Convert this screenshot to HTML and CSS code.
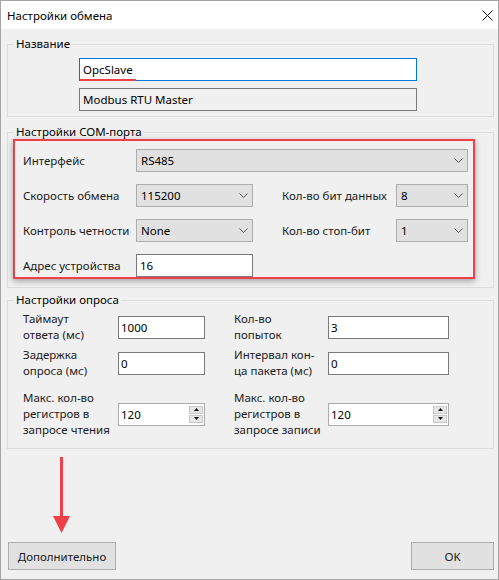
FILE: index.html
```html
<!DOCTYPE html>
<html lang="ru">
<head>
  <meta charset="UTF-8">
  <title>Настройки обмена</title>
  <link rel="stylesheet" href="styles.css">
</head>
<body>
  <div class="window">
    <div class="titlebar">
      <span class="title">Настройки обмена</span>
      <svg class="close" width="11" height="11" viewBox="0 0 11 11">
        <path d="M0.5 0.5 L10.5 10.5 M10.5 0.5 L0.5 10.5" stroke="#111" stroke-width="1" fill="none"/>
      </svg>
    </div>

    <div class="content">
      <fieldset class="group">
        <legend>Название</legend>
        <div class="group-body body-name">
          <div class="edit edit-focus">OpcSlave<i class="mark"></i></div>
          <div class="edit edit-readonly">Modbus RTU Master</div>
        </div>
      </fieldset>

      <fieldset class="group group-com">
        <legend>Настройки COM-порта</legend>
        <div class="group-body body-com">
          <div class="highlight">
            <div class="com-grid">
              <span class="lbl">Интерфейс</span>
              <div class="combo combo-wide">RS485<svg class="chev" width="9" height="5" viewBox="0 0 9 5"><path d="M0.5 0.5 L4.5 4.5 L8.5 0.5" stroke="#555" fill="none"/></svg></div>

              <span class="lbl">Скорость обмена</span>
              <div class="combo">115200<svg class="chev" width="9" height="5" viewBox="0 0 9 5"><path d="M0.5 0.5 L4.5 4.5 L8.5 0.5" stroke="#555" fill="none"/></svg></div>
              <span class="lbl lbl-right">Кол-во бит данных</span>
              <div class="combo">8<svg class="chev" width="9" height="5" viewBox="0 0 9 5"><path d="M0.5 0.5 L4.5 4.5 L8.5 0.5" stroke="#555" fill="none"/></svg></div>

              <span class="lbl">Контроль четности</span>
              <div class="combo">None<svg class="chev" width="9" height="5" viewBox="0 0 9 5"><path d="M0.5 0.5 L4.5 4.5 L8.5 0.5" stroke="#555" fill="none"/></svg></div>
              <span class="lbl lbl-right">Кол-во стоп-бит</span>
              <div class="combo">1<svg class="chev" width="9" height="5" viewBox="0 0 9 5"><path d="M0.5 0.5 L4.5 4.5 L8.5 0.5" stroke="#555" fill="none"/></svg></div>

              <span class="lbl">Адрес устройства</span>
              <div class="edit">16</div>
            </div>
          </div>
        </div>
      </fieldset>

      <fieldset class="group group-poll">
        <legend>Настройки опроса</legend>
        <div class="group-body body-poll">
          <div class="poll-row row-1">
            <span class="plbl">Таймаут<br>ответа (мс)</span>
            <div class="edit edit-num">1000</div>
            <span class="plbl plbl-right">Кол-во<br>попыток</span>
            <div class="edit edit-num">3</div>
          </div>
          <div class="poll-row row-2">
            <span class="plbl">Задержка<br>опроса (мс)</span>
            <div class="edit edit-num">0</div>
            <span class="plbl plbl-right">Интервал кон-<br>ца пакета (мс)</span>
            <div class="edit edit-num">0</div>
          </div>
          <div class="poll-row row-3">
            <span class="plbl">Макс. кол-во<br>регистров в<br>запросе чтения</span>
            <div class="edit edit-num spin">120
              <div class="spin-btns">
                <span class="spin-btn"><svg width="5" height="3" viewBox="0 0 5 3"><path d="M2.5 0 L5 3 L0 3 Z" fill="#111"/></svg></span>
                <span class="spin-btn"><svg width="5" height="3" viewBox="0 0 5 3"><path d="M0 0 L5 0 L2.5 3 Z" fill="#111"/></svg></span>
              </div>
            </div>
            <span class="plbl plbl-right">Макс. кол-во<br>регистров в<br>запросе записи</span>
            <div class="edit edit-num spin">120
              <div class="spin-btns">
                <span class="spin-btn"><svg width="5" height="3" viewBox="0 0 5 3"><path d="M2.5 0 L5 3 L0 3 Z" fill="#111"/></svg></span>
                <span class="spin-btn"><svg width="5" height="3" viewBox="0 0 5 3"><path d="M0 0 L5 0 L2.5 3 Z" fill="#111"/></svg></span>
              </div>
            </div>
          </div>
        </div>
      </fieldset>
    </div>

    <div class="footer">
      <button class="btn btn-more">Дополнительно</button>
      <button class="btn btn-ok">OK</button>
      <!-- стрелка-указатель на кнопку -->
      <svg class="arrow" width="19" height="77" viewBox="0 0 19 77">
        <rect x="8" y="0" width="3" height="62" fill="#ef4047"/>
        <path d="M1 59 L18 59 L9.5 76 Z" fill="#ef4047"/>
      </svg>
    </div>
  </div>
</body>
</html>
```

FILE: styles.css
```css
* {
  box-sizing: border-box;
}

body {
  margin: 0;
  font-family: "Noto Sans", "Open Sans", sans-serif;
  font-size: 11.5px;
  color: #000;
  background: #f0f0f0;
}

.window {
  position: relative;
  width: 499px;
  height: 580px;
  border: 1px solid #a5a5a5;
  background: #f0f0f0;
  display: flex;
  flex-direction: column;
}

.titlebar {
  height: 28px;
  background: #fff;
  display: flex;
  align-items: center;
  justify-content: space-between;
  padding: 0 5px 0 6px;
}

.content {
  padding: 0 4px 0 6px;
}

/* рамки групп */
.group {
  margin: 8px 0 0;
  padding: 0;
  border: 1px solid #dcdcdc;
  min-width: 0;
}

.group legend {
  line-height: 14px;
  padding: 0 2px;
  margin-left: 6px;
}

.group-poll {
  margin-top: 5px;
}

.body-name {
  padding: 7px 0 5px 71px;
}

.body-com {
  padding: 0 18px 8px 5px;
}

.body-poll {
  padding: 4px 0 10px 15px;
}

/* поля ввода */
.edit {
  position: relative;
  height: 23px;
  line-height: 21px;
  border: 1px solid #7a7a7a;
  background: #fff;
  padding: 0 3px;
  white-space: nowrap;
}

.body-name .edit {
  width: 338px;
}

.body-name .edit + .edit {
  margin-top: 7px;
}

.edit-focus {
  border-color: #0078d7;
}

.edit-readonly {
  background: #f0f0f0;
}

.mark {
  position: absolute;
  left: 0;
  bottom: -1px;
  width: 56px;
  height: 2px;
  background: #ef4047;
}

/* COM-порт */
.highlight {
  border: 2px solid #ef4047;
  box-shadow: 0 2px 6px rgba(0, 0, 0, 0.35);
  padding: 8px 4px 0 8px;
}

.com-grid {
  display: grid;
  grid-template-columns: 113px 117px 143px 72px;
  grid-auto-rows: 23px;
  row-gap: 12px;
  align-items: center;
}

.lbl,
.plbl {
  color: #1a1a1a;
}

.lbl-right,
.plbl-right {
  padding-left: 29px;
}

.combo {
  height: 23px;
  line-height: 21px;
  background: #e1e1e1;
  border: 1px solid #adadad;
  padding: 0 4px;
  display: flex;
  align-items: center;
  justify-content: space-between;
}

.combo-wide {
  grid-column: 2 / 5;
}

/* настройки опроса */
.poll-row {
  display: grid;
  grid-template-columns: 95px 87px 123px 121px;
  align-items: center;
}

.row-1,
.row-2 {
  height: 32px;
}

.row-2 {
  margin-top: 4px;
}

.row-3 {
  height: 48px;
  margin-top: 11px;
}

.plbl {
  line-height: 16px;
}

.edit-num {
  padding: 0 2px;
}

.spin {
  border-color: #adadad;
}

.spin-btns {
  position: absolute;
  right: 1px;
  top: 2px;
  display: flex;
  flex-direction: column;
  gap: 1px;
}

.spin-btn {
  width: 14px;
  height: 8px;
  background: #e6e6e6;
  border: 1px solid #c8c8c8;
  display: flex;
  align-items: center;
  justify-content: center;
}

/* кнопки внизу */
.footer {
  position: relative;
  margin-top: auto;
  display: flex;
  justify-content: space-between;
  align-items: flex-end;
  padding: 0 4px 9px 7px;
}

.btn {
  height: 28px;
  font-family: inherit;
  font-size: 11.5px;
  color: #1a1a1a;
  background: #e1e1e1;
  border: 1px solid #adadad;
  padding: 0;
}

.btn-more {
  width: 108px;
}

.btn-ok {
  width: 83px;
}

.arrow {
  position: absolute;
  left: 51px;
  bottom: 45px;
}
```
